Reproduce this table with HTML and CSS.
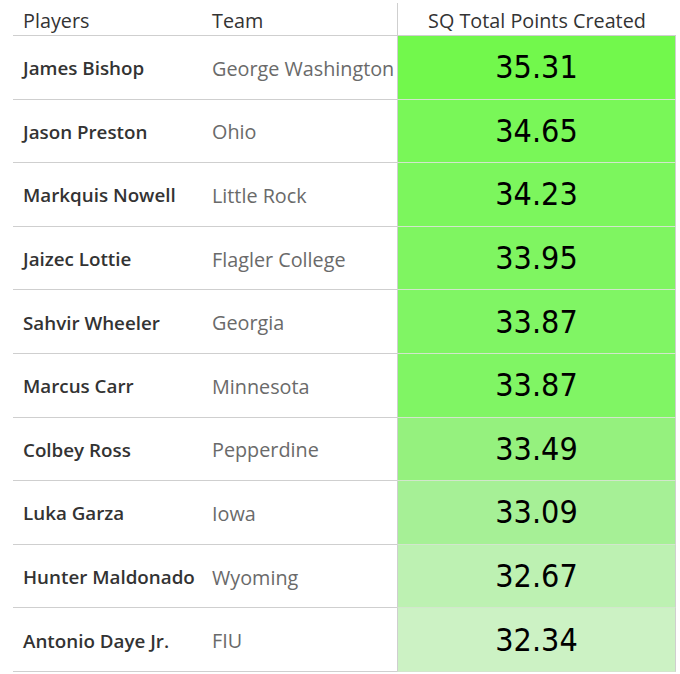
FILE: index.html
```html
<!DOCTYPE html>
<html>
<head>
<meta charset="utf-8">
<link rel="stylesheet" href="styles.css">
</head>
<body>
<div class="table">
  <div class="row head">
    <div class="c player">Players</div>
    <div class="c team">Team</div>
    <div class="c val">SQ Total Points Created</div>
  </div>
  <div class="row"><div class="c player">James Bishop</div><div class="c team">George Washington</div><div class="c val g1">35.31</div></div>
  <div class="row"><div class="c player">Jason Preston</div><div class="c team">Ohio</div><div class="c val g2">34.65</div></div>
  <div class="row"><div class="c player">Markquis Nowell</div><div class="c team">Little Rock</div><div class="c val g3">34.23</div></div>
  <div class="row"><div class="c player">Jaizec Lottie</div><div class="c team">Flagler College</div><div class="c val g4">33.95</div></div>
  <div class="row"><div class="c player">Sahvir Wheeler</div><div class="c team">Georgia</div><div class="c val g5">33.87</div></div>
  <div class="row"><div class="c player">Marcus Carr</div><div class="c team">Minnesota</div><div class="c val g5">33.87</div></div>
  <div class="row"><div class="c player">Colbey Ross</div><div class="c team">Pepperdine</div><div class="c val g7">33.49</div></div>
  <div class="row"><div class="c player">Luka Garza</div><div class="c team">Iowa</div><div class="c val g8">33.09</div></div>
  <div class="row"><div class="c player">Hunter Maldonado</div><div class="c team">Wyoming</div><div class="c val g9">32.67</div></div>
  <div class="row"><div class="c player">Antonio Daye Jr.</div><div class="c team">FIU</div><div class="c val g10">32.34</div></div>
</div>
</body>
</html>
```

FILE: styles.css
```css
html, body {
  margin: 0;
  padding: 0;
  background: #ffffff;
}
.table {
  margin: 3px 0 0 13px;
  width: 663px;
  font-family: "Open Sans", sans-serif;
}
.row {
  display: grid;
  grid-template-columns: 194px 190px 279px;
  height: 63.6px;
  box-sizing: border-box;
  border-bottom: 1px solid #cfcfcf;
}
.row.head {
  height: 33px;
  border-bottom: 1px solid #cfcfcf;
}
.c {
  display: flex;
  align-items: center;
  white-space: nowrap;
  overflow: hidden;
}
.player, .team {
  padding-top: 2px;
}
.player {
  padding-left: 10px;
  font-size: 18.8px;
  font-weight: 600;
  color: #333333;
}
.team {
  padding-left: 5px;
  font-size: 19.8px;
  color: #6a6a6a;
}
.head .c {
  font-weight: 400;
  color: #333333;
  font-size: 19.8px;
  padding-top: 2px;
}
.val {
  justify-content: center;
  border-left: 1px solid #cfcfcf;
  border-right: 1px solid #cfcfcf;
  font-family: "DejaVu Sans Condensed", "DejaVu Sans", sans-serif;
  font-size: 32px;
  color: #000000;
  margin-bottom: -1px;
  border-bottom: 1px solid #d2e6cc;
}
.head .val {
  border-right: none;
  border-bottom: none;
  margin-bottom: 0;
  font-family: "Open Sans", sans-serif;
}
.g1 { background: #72f84c; }
.g2 { background: #79f758; }
.g3 { background: #7cf65d; }
.g4 { background: #7ff561; }
.g5 { background: #80f564; }
.g7 { background: #95f17e; }
.g8 { background: #a6f096; }
.g9 { background: #bdf1b2; }
.g10 { background: #ccf2c4; }
```
